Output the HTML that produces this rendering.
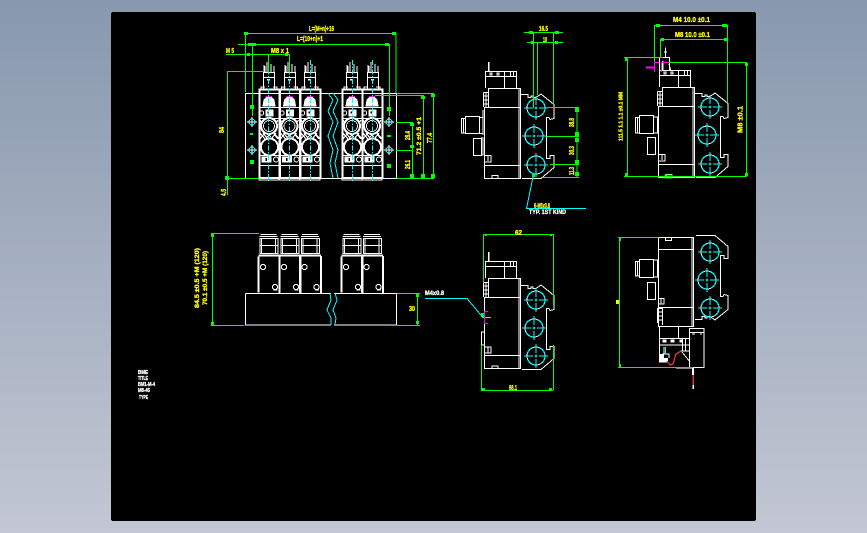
<!DOCTYPE html>
<html><head><meta charset="utf-8"><style>
html,body{margin:0;padding:0;width:867px;height:533px;overflow:hidden;background:linear-gradient(#8898ae,#c2c7d3)}
svg{position:absolute;left:0;top:0;shape-rendering:crispEdges}
text{font-family:"Liberation Sans",sans-serif;font-weight:bold;stroke:currentColor;stroke-width:.3}
</style></head><body>
<svg width="867" height="533" viewBox="0 0 867 533" xmlns="http://www.w3.org/2000/svg">
<defs>
<g id="mod" fill="none" stroke="#fff" stroke-width="1">
<rect x="0.5" y="89.5" width="20" height="88.5" stroke-width="1.8"/>
<path d="M2 89V87H6M14 87H18V89M0 178V180H20V178"/>
<path d="M4 106L5 100L8 97H12L15 100L16 106Z" fill="#fff"/>
<path d="M7 96.5H13" stroke="#f0f"/>
<path d="M0 107.5H20M0 118.5H20M0 165.5H20M0 155.5H20"/>
<circle cx="2.5" cy="113" r="2.2"/>
<rect x="7" y="110" width="7" height="6" fill="#fff"/>
<rect x="8.5" y="111.5" width="1.5" height="2" fill="#000" stroke="none"/>
<circle cx="10" cy="126" r="8" stroke-width="2"/>
<circle cx="10" cy="126" r="5.5" stroke-width=".8"/>
<circle cx="10.5" cy="147" r="8.5" stroke-width="2"/>
<path d="M1 133L6 139M4 133L8 138M15 133L20 139M17 133L13 138M1 139L5 134M19 139L15 134M1 120L3 123M19 120L17 123M8 133L12 137M12 133L8 137" stroke-width="1.2"/>
<rect x="3" y="157" width="9" height="5" fill="#fff"/>
<rect x="6.5" y="158" width="1.5" height="3" fill="#000" stroke="none"/>
<circle cx="17" cy="159.5" r="2.4"/>
</g>
<g id="sol" fill="none" stroke="#fff">
<rect x="4.5" y="72.5" width="11" height="17"/>
<path d="M4.5 77.5H15.5"/>
<path d="M5 72V65M8 72V62M12 72V64M15 72V66M6 72V66" stroke-width="1.3"/>
<rect x="8" y="79" width="3" height="1.5" fill="#fff" stroke="none"/>
</g>
<path id="brk" fill="none" stroke="#fff" d="M521 94.5H528V97.5H531V96H533V97.5H536L541 94L554 104.5V118.5L550 119.5L549 117.5H546.5V158.5H550V155.5H554V167.5L541 178.5H522"/>
<g id="hole" fill="none">
<circle r="9" stroke="#fff"/>
<circle r="9" stroke="#0ff" stroke-dasharray="9 6" stroke-width="1.2"/>
<path d="M-12 0H-3M-1.5 0H1.5M3 0H12M0 -12V-3M0 -1.5V1.5M0 3V12" stroke="#0ff"/>
</g>
<g id="bhole" fill="none">
<circle r="3" stroke="#0ff"/>
<path d="M-5 0H5M0 -5V5" stroke="#fff"/>
</g>
<path id="wave" fill="none" stroke="#0ff" d="M3 93L8 100L3 111L8 122L3 136L8 150L5 163L8 178"/>
<g id="upper" fill="none" stroke="#fff">
<path d="M1 234.5H17M0 236.5H18"/>
<rect x="0.5" y="238.5" width="18" height="15" stroke-width="1.2"/>
<path d="M1 245.5H18M2 238V253M16 238V253"/>
<path d="M-1 256.5V292.5M20 256V293M-1 255.5H20" stroke-width="1.8"/>
<circle cx="3.5" cy="267" r="2.6"/>
<circle cx="15.5" cy="287" r="2.6"/>
<path d="M18 290H14"/>
</g>
</defs>
<rect x="111" y="12" width="645" height="509" rx="2" fill="#000"/>

<!-- VIEW 1 -->
<g>
<path d="M245.5 93.5H396.5V178.5H245.5Z" fill="none" stroke="#fff" stroke-width="1.2"/>
<use href="#mod" x="259"/><use href="#mod" x="279.5"/><use href="#mod" x="300"/>
<use href="#mod" x="342"/><use href="#mod" x="362"/>
<use href="#sol" x="259"/><use href="#sol" x="280"/><use href="#sol" x="300"/>
<use href="#sol" x="342"/><use href="#sol" x="363"/>
<rect x="324" y="94" width="17" height="84" fill="#000"/>
<path d="M321 93.5H342M321 178.5H342" stroke="#fff"/>
</g>
<use href="#wave" x="325"/><use href="#wave" x="330"/>
<g stroke="#0ff" stroke-dasharray="5 1.5 1.5 1.5" fill="none">
<path d="M268.5 60V181M289.5 60V181M310.5 60V181M352.5 60V181M372.5 60V181"/>
</g>
<use href="#bhole" x="252" y="122"/><use href="#bhole" x="252" y="150"/>
<use href="#bhole" x="389" y="122"/><use href="#bhole" x="389" y="150"/>
<g fill="none" stroke="#0f0">
<path d="M245.5 33.5H396.5M245.5 33V92M396 33V93"/>
<path d="M238 44.5H389.5M252.5 44V106M252.5 108V116M389.5 44V116"/>
<path d="M226 54.5H289.5M268.5 54V72M289.5 54V72"/>
<path d="M227 71.5H263M227.5 71V195M227 178.5H259"/>
<path d="M397 93.5H434M375 95.5H424M396 122.5H413M396 150.5H413M397 178.5H434"/>
<path d="M412.5 122V178M423.5 95V178M433.5 93V178"/>
</g>
<g fill="#0f0">
<rect x="244" y="32" width="4" height="3"/><rect x="392" y="32" width="4" height="3"/>
<rect x="250" y="105" width="4" height="4"/><rect x="250" y="133" width="3" height="2"/><rect x="250" y="160" width="4" height="4"/>
<rect x="387" y="107" width="4" height="4"/><rect x="387" y="135" width="4" height="2"/><rect x="387" y="164" width="4" height="4"/>
<rect x="225" y="176" width="4" height="4"/><rect x="431" y="94" width="4" height="3"/><rect x="421" y="96" width="4" height="3"/><rect x="410" y="123" width="4" height="3"/><rect x="410" y="145" width="4" height="3"/><rect x="421" y="174" width="4" height="4"/><rect x="431" y="174" width="4" height="4"/><rect x="410" y="174" width="4" height="4"/>
<rect x="248" y="43" width="8" height="3"/><rect x="385" y="43" width="4" height="3"/><rect x="247" y="53" width="3" height="3"/><rect x="285" y="53" width="3" height="3"/>
</g>
<g fill="#ff0" color="#ff0" font-size="7">
<text x="309" y="31" textLength="25" lengthAdjust="spacingAndGlyphs">L=(M+n)+16</text>
<text x="297" y="41" textLength="26" lengthAdjust="spacingAndGlyphs">L=(10+n)+1</text>
<text x="226" y="53" textLength="8" lengthAdjust="spacingAndGlyphs">M 5</text>
<text x="271" y="53" textLength="18" lengthAdjust="spacingAndGlyphs">M8 x 1</text>
<text transform="translate(224,133) rotate(-90)" textLength="6" lengthAdjust="spacingAndGlyphs">84</text>
<text transform="translate(226,196) rotate(-90)" textLength="7" lengthAdjust="spacingAndGlyphs">4.5</text>
<text transform="translate(410,140) rotate(-90)" textLength="9" lengthAdjust="spacingAndGlyphs">28.4</text>
<text transform="translate(410,169) rotate(-90)" textLength="9" lengthAdjust="spacingAndGlyphs">26.1</text>
<text transform="translate(421,155) rotate(-90)" font-size="6" textLength="38" lengthAdjust="spacingAndGlyphs">71.2 ±0.5 +1</text>
<text transform="translate(432,143) rotate(-90)" textLength="10" lengthAdjust="spacingAndGlyphs">77.4</text>
</g>

<!-- VIEW 2 -->
<g id="side" fill="none" stroke="#fff">
<path d="M488.5 107V88.5H520.5V178.5H484.5V107.5H520.5M484.5 165.5H520M519 89V178" stroke-width="1.2"/>
<path d="M492 178V175.5H498V178"/>
<path d="M485.5 88V71.5H516.5V88M485.5 76.5H516.5M504.5 72V88M510.5 72V76M513.5 72V76"/>
<path d="M488.5 62V71" stroke-width="1.5"/>
<path d="M483.5 92.5H488M483.5 92.5V107M484 96H488M484 100H488M484 104H488M486 92V107"/>
<rect x="490" y="73" width="2" height="2"/><rect x="497" y="73" width="2" height="2"/>
<path d="M484 155.5H491V162H484M488 156V161"/>
</g>
<g fill="none" stroke="#fff">
<rect x="465.5" y="116.5" width="14" height="17"/><path d="M465 118.5H461.5V133H465M463.5 118V133M479.5 117.5H483V133.5H479.5M483 110V135"/>
<rect x="473.5" y="138.5" width="8" height="17"/><path d="M481 138H483V155H481"/>
</g>
<use href="#brk"/>
<use href="#hole" x="536" y="108"/><use href="#hole" x="534" y="136"/><use href="#hole" x="536" y="165"/>
<g fill="none" stroke="#0f0">
<path d="M524 32.5H563M527 42.5H563M533.5 32V108M537.5 42V95M553.5 32V105"/>
<path d="M548 107.5H579M547 136.5H579M550 164.5H579M543 177.5H579M577 107V177"/>
</g>
<g fill="#0f0"><rect x="529" y="31" width="4" height="3"/><rect x="555" y="31" width="4" height="3"/><rect x="531" y="41" width="3" height="3"/><rect x="555" y="41" width="3" height="3"/>
<rect x="575" y="108" width="4" height="4"/><rect x="575" y="132" width="4" height="4"/><rect x="575" y="138" width="4" height="4"/><rect x="575" y="160" width="4" height="4"/><rect x="575" y="172" width="4" height="4"/><rect x="532" y="174" width="3" height="3"/></g>
<path d="M533 177L526.5 208.5H586" fill="none" stroke="#0ff"/>
<g fill="#ff0" color="#ff0" font-size="7">
<text x="539" y="31" textLength="9" lengthAdjust="spacingAndGlyphs">16.5</text>
<text x="543" y="42" textLength="4" lengthAdjust="spacingAndGlyphs">10</text>
<text x="534" y="208" textLength="16" lengthAdjust="spacingAndGlyphs">6-M5x0.8</text>
<text transform="translate(574,127) rotate(-90)" textLength="9" lengthAdjust="spacingAndGlyphs">38.8</text>
<text transform="translate(574,155) rotate(-90)" textLength="9" lengthAdjust="spacingAndGlyphs">30.3</text>
<text transform="translate(574,175) rotate(-90)" textLength="8" lengthAdjust="spacingAndGlyphs">11.3</text>
</g>
<text x="529" y="214" fill="#fff" color="#fff" font-size="6" textLength="37" lengthAdjust="spacingAndGlyphs">TYP. 1ST KIND</text>

<!-- VIEW 3 -->
<use href="#side" x="174" y="-1"/>
<g fill="none" stroke="#fff">
<path d="M659.5 71V57.5H669.5V71M665.5 57V47.5M664 52H667M669 64L671 71"/>
<rect x="639.5" y="115.5" width="14" height="18"/><path d="M639 117.5H635.5V133H639M637.5 117V133M653.5 117H657.5V133H653.5"/>
<rect x="647.5" y="137.5" width="8" height="17"/>
</g>
<rect x="665" y="175" width="7" height="3" fill="none" stroke="#0f0"/>
<use href="#brk" x="174" y="-1"/>
<use href="#hole" x="710" y="107"/><use href="#hole" x="707" y="135"/><use href="#hole" x="710" y="164"/>
<path d="M654.5 72V62.5H659M662 62.5H669M661.5 62V72" fill="none" stroke="#f0f" stroke-width="1.3"/>
<path d="M646 67.5H654" stroke="#f0f" stroke-width="2"/>
<g fill="none" stroke="#0f0">
<path d="M654 25.5H727.5M660 39.5H727.5M654.5 25V62M660.5 39V57M727.5 25V103"/>
<path d="M624 57.5H663M669 62.5H747M624 176.5H747M627.5 57V176M746.5 62V176"/>
</g>
<g fill="#0f0"><rect x="656" y="24" width="4" height="3"/><rect x="722" y="24" width="5" height="3"/><rect x="661" y="38" width="3" height="3"/><rect x="724" y="38" width="3" height="3"/><rect x="625" y="58" width="3" height="3"/><rect x="625" y="173" width="3" height="3"/><rect x="745" y="63" width="3" height="3"/><rect x="745" y="173" width="3" height="3"/></g>
<g fill="#ff0" color="#ff0" font-size="7">
<text x="673" y="22" textLength="37" lengthAdjust="spacingAndGlyphs">M4 10.0 ±0.1</text>
<text x="675" y="37" textLength="35" lengthAdjust="spacingAndGlyphs">M8 10.0 ±0.1</text>
<text transform="translate(622.5,141) rotate(-90)" font-size="5" textLength="49" lengthAdjust="spacingAndGlyphs">111.5 1.1 1.1 ±0.1 MM</text>
<text transform="translate(742.5,133) rotate(-90)" textLength="27" lengthAdjust="spacingAndGlyphs">M8 ±0.1</text>
</g>

<!-- VIEW 4 -->
<g>
<use href="#upper" x="259.5"/><use href="#upper" x="280.5"/><use href="#upper" x="301"/>
<use href="#upper" x="342.5"/><use href="#upper" x="363"/>
<path d="M245.5 293.5H331M334 293.5H396.5V325H334M331 325H245.5V293.5M396.5 293V325" fill="none" stroke="#fff" stroke-width="1.2"/>
</g>
<path d="M330 293L331 300L327 310L331 318L331 325M335 293L337 300L333 310L336 318L335 325" fill="none" stroke="#0ff"/>
<g fill="none" stroke="#0f0">
<path d="M211 233.5H259M211 325.5H244M212.5 233V325M397 293.5H420M397 325.5H420M417.5 293V325"/>
</g>
<g fill="#0f0"><rect x="211" y="233" width="3" height="4"/><rect x="211" y="322" width="3" height="3"/><rect x="416" y="294" width="3" height="3"/><rect x="416" y="321" width="3" height="3"/></g>
<g fill="#ff0" color="#ff0" font-size="6">
<text x="409" y="311" font-size="7" textLength="6" lengthAdjust="spacingAndGlyphs">30</text>
<text transform="translate(199,308) rotate(-90)" textLength="60" lengthAdjust="spacingAndGlyphs">84.5 ±0.5 +M (120)</text>
<text transform="translate(207,305) rotate(-90)" textLength="54" lengthAdjust="spacingAndGlyphs">70.1 ±0.5 +M (120)</text>
</g>

<!-- VIEW 5 -->
<g transform="translate(0,190)">
<g fill="none" stroke="#fff">
<path d="M488.5 107V88.5H520.5V178.5H484.5V107.5H520.5M484.5 165.5H520M519 89V178" stroke-width="1.2"/>
<path d="M492 178V176H498V178"/>
<path d="M485.5 88V71.5H516.5V88M485.5 76.5H516.5M504.5 72V88M510.5 72V76M513.5 72V76"/>
<path d="M488.5 62V71" stroke-width="1.5"/>
<path d="M483.5 92.5H488M483.5 92.5V107M484 96H488M484 100H488M484 104H488M486 92V107"/>
<path d="M484 157H491V163H484M488 157V163"/>
<path d="M484 142H481.5V155H484" stroke-width="1.2"/>
</g>
</g>
<use href="#brk" y="191"/>
<use href="#hole" x="536" y="300"/><use href="#hole" x="534" y="328"/><use href="#hole" x="536" y="356"/>
<g fill="none" stroke="#0f0">
<path d="M483 234.5H553M481 390.5H553M483.5 234V282M481.5 345V390M553.5 234V305M553.5 345V390"/>
</g>
<g fill="#0f0"><rect x="485" y="234" width="2" height="2"/><rect x="550" y="234" width="2" height="2"/><rect x="481" y="388" width="4" height="3"/><rect x="549" y="388" width="3" height="3"/><rect x="481" y="313" width="3" height="4"/></g>
<path d="M425 298.5H467L483 317.5H491" fill="none" stroke="#0ff"/>
<path d="M488 311.5H484.5V323.5H488" fill="none" stroke="#f0f" stroke-width="1.3"/>
<g fill="#ff0" color="#ff0" font-size="7">
<text x="515" y="235" textLength="7" lengthAdjust="spacingAndGlyphs">62</text>
<text x="509" y="390" textLength="8" lengthAdjust="spacingAndGlyphs">68.1</text>
</g>
<text x="425" y="295" fill="#fff" color="#fff" font-size="6" textLength="19" lengthAdjust="spacingAndGlyphs">M4x0.8</text>

<!-- VIEW 6 -->
<g fill="none" stroke="#fff">
<path d="M658.5 237.5H693.5V326.5H658.5V237.5M658.5 249.5H693M658.5 307.5H693M662.5 308V325M692 238V326" stroke-width="1.1"/>
<rect x="665.5" y="237.5" width="6" height="3"/>
<rect x="639.5" y="259.5" width="14" height="18"/><path d="M639 261.5H635.5V276H639M637.5 261V276M653.5 260H657.5V277H653.5"/>
<rect x="647.5" y="282.5" width="8" height="17"/><path d="M658 298.5H664V304H658M661 299V304"/>
<path d="M657.5 308.5H662M657.5 308V323M658 312H662M658 316H662M658 320H662"/>
<path d="M659.5 326V345H690M659.5 338.5H690M678.5 327V338M682.5 338V351M685.5 338V351M689.5 338V351"/>
<rect x="689.5" y="328.5" width="14.5" height="39"/><path d="M690 332.5H704M692 334H695M700 334H702"/>
<rect x="663" y="340" width="3" height="2" fill="#fff"/><rect x="671" y="340" width="3" height="2" fill="#fff"/><rect x="680" y="340" width="2" height="2" fill="#fff"/>
<path d="M659.5 345V362H668M664 347V354M662 354H669V358M681 351H690M682 352L690 362M689.5 352V368M676 368H693"/>
</g>
<rect x="659" y="354" width="5" height="8" fill="#fff"/><rect x="664" y="358" width="4" height="4" fill="#fff"/>
<path d="M665.5 347V354" stroke="#0ff"/>
<path d="M667 361L670 365L673 364L676 354L681 351" fill="none" stroke="#e8323c" stroke-width="1.3"/>
<path d="M693 368V375" stroke="#fff" stroke-width="2"/><path d="M693 375V386" stroke="#e8323c" stroke-width="1.5"/><path d="M693 385V389" stroke="#fff" stroke-width="1.5"/>
<path transform="translate(174,414) scale(1,-1)" fill="none" stroke="#fff" d="M521 94.5H528V97.5H531V96H533V97.5H536L541 94L554 104.5V118.5L550 119.5L549 117.5H546.5V158.5H550V155.5H554V167.5L541 178.5H522"/>
<use href="#hole" x="710" y="252"/><use href="#hole" x="707" y="280"/><use href="#hole" x="710" y="308"/>
<g fill="none" stroke="#0f0">
<path d="M618 237.5H658M618 367.5H693M619.5 237V367"/>
</g>
<g fill="#0f0"><rect x="619" y="238" width="2" height="3"/><rect x="619" y="364" width="2" height="3"/></g>
<rect x="616" y="300" width="3" height="4" fill="#ff0"/>
<text x="616" y="304" fill="#ff0" color="#ff0" font-size="5" textLength="3" lengthAdjust="spacingAndGlyphs">80</text>

<!-- TITLE BLOCK -->
<g fill="#fff" color="#fff" font-size="5">
<text x="138" y="374" textLength="10" lengthAdjust="spacingAndGlyphs">BME</text>
<text x="138" y="380" textLength="10" lengthAdjust="spacingAndGlyphs">TITLE</text>
<text x="138" y="386" textLength="17" lengthAdjust="spacingAndGlyphs">BM1-M-4</text>
<text x="138" y="392" textLength="12" lengthAdjust="spacingAndGlyphs">M8-45</text>
<text x="139" y="399" textLength="9" lengthAdjust="spacingAndGlyphs">TYPE</text>
</g>
</svg>
</body></html>
